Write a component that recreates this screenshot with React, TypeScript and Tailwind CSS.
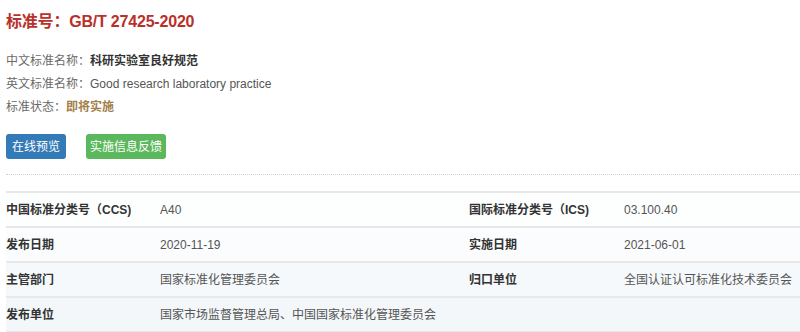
import React from "react";

const font = { fontFamily: '"Liberation Sans", Arial, "Noto Sans CJK SC", sans-serif' };

const rows = [
  { l1: "中国标准分类号（CCS)", v1: "A40", l2: "国际标准分类号（ICS)", v2: "03.100.40", bg: "bg-[#fdfefe]" },
  { l1: "发布日期", v1: "2020-11-19", l2: "实施日期", v2: "2021-06-01", bg: "bg-[#fbfcfd]" },
  { l1: "主管部门", v1: "国家标准化管理委员会", l2: "归口单位", v2: "全国认证认可标准化技术委员会", bg: "bg-[#f6f9fb]" },
  { l1: "发布单位", v1: "国家市场监督管理总局、中国国家标准化管理委员会", l2: "", v2: "", bg: "bg-[#f3f7fa]" },
];

export default function App() {
  return (
    <div className="w-[800px] h-[332px] bg-white overflow-hidden pl-[6px] pt-[10px]" style={font}>
      <h1 className="h-[24px] leading-[24px] text-[16px] font-bold text-[#b8312b] tracking-[-0.2px]">标准号：GB/T 27425-2020</h1>
      <div className="mt-[16px] text-[12px] text-[#6a6a6a]">
        <div className="h-[23px] leading-[23px]">
          中文标准名称：<span className="font-bold text-[#333]">科研实验室良好规范</span>
        </div>
        <div className="h-[23px] leading-[23px]">
          英文标准名称：<span className="text-[#555]">Good research laboratory practice</span>
        </div>
        <div className="h-[23px] leading-[23px]">
          标准状态：<span className="font-bold text-[#a3804a]">即将实施</span>
        </div>
      </div>
      <div className="mt-[15px] flex gap-[20px]">
        <div className="h-[25px] w-[60px] rounded-[3px] bg-[#337ab7] text-white text-[12px] flex items-center justify-center">在线预览</div>
        <div className="h-[25px] w-[80px] rounded-[3px] bg-[#5cb85c] text-white text-[12px] flex items-center justify-center">实施信息反馈</div>
      </div>
      <div className="mt-[15px] border-t-[1px] border-dotted border-[#d0d0d0]" />
      <div className="mt-[16px] border-t-[2px] border-[#e8e8e8]">
        {rows.map((r, i) => (
          <div key={i} className={`grid grid-cols-[154px_309px_155px_1fr] h-[35px] items-center border-b-[2px] border-[#e8e8e8] text-[12px] ${r.bg}`}>
            <div className="font-bold text-[#333] whitespace-nowrap">{r.l1}</div>
            <div className="text-[#555] whitespace-nowrap">{r.v1}</div>
            <div className="font-bold text-[#333] whitespace-nowrap">{r.l2}</div>
            <div className="text-[#555] whitespace-nowrap">{r.v2}</div>
          </div>
        ))}
      </div>
    </div>
  );
}
